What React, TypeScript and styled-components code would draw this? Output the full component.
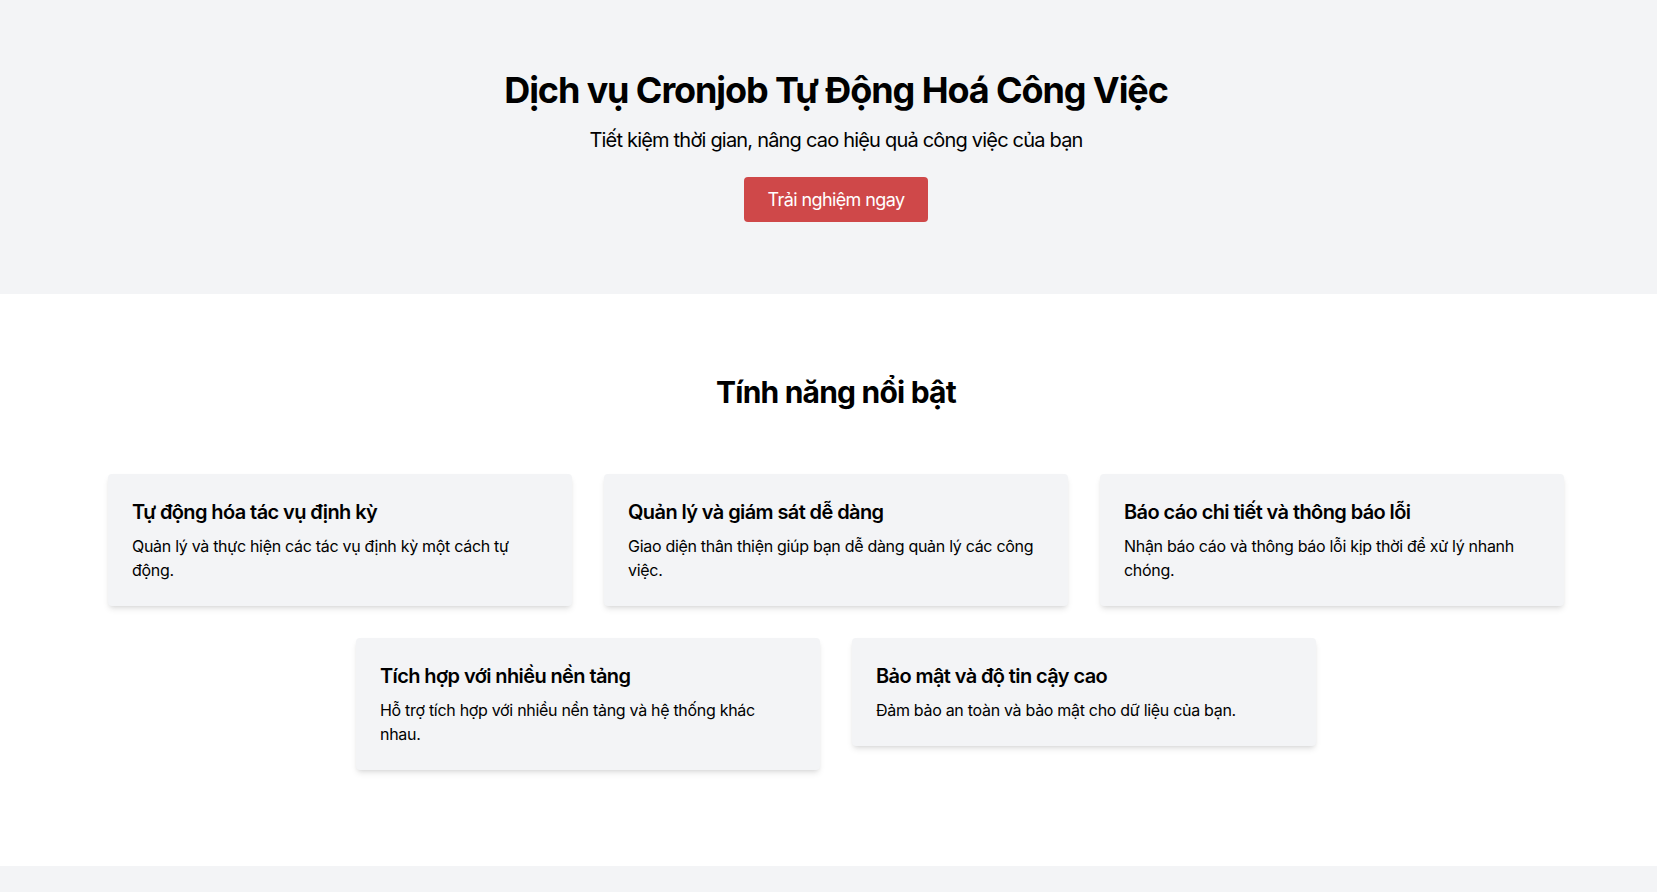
import React from "react";
import styled, { createGlobalStyle } from "styled-components";

const GlobalStyle = createGlobalStyle`
  * { box-sizing: border-box; }
  html, body { margin: 0; padding: 0; }
  body {
    font-family: Inter, "Noto Sans", "Liberation Sans", sans-serif;
    color: #000;
    background: #fff;
    -webkit-font-smoothing: antialiased;
  }
`;

const Hero = styled.header`
  background: #f3f4f6;
  padding: 70px 1px 72px 16px;
  display: flex;
  flex-direction: column;
  align-items: center;
  text-align: center;
`;

const HeroTitle = styled.h1`
  margin: 0 0 16px;
  font-size: 36px;
  line-height: 40px;
  font-weight: 700;
  letter-spacing: -1.1px;
`;

const HeroSubtitle = styled.p`
  margin: 0 0 23px;
  font-size: 20px;
  line-height: 28px;
  font-weight: 400;
  letter-spacing: -0.8px;
`;

const CtaButton = styled.button`
  font-family: inherit;
  font-size: 18px;
  line-height: 28px;
  letter-spacing: -0.6px;
  white-space: nowrap;
  color: #fff;
  background: #cf4849;
  border: none;
  border-radius: 4px;
  padding: 8.5px 24px;
  cursor: pointer;
`;

const Features = styled.section`
  padding: 80px 1px 96px 16px;
  display: flex;
  flex-direction: column;
  align-items: center;
`;

const SectionTitle = styled.h2`
  margin: 0 0 64px;
  font-size: 30px;
  line-height: 36px;
  font-weight: 700;
  letter-spacing: -0.8px;
`;

const CardGrid = styled.div`
  width: 1456px;
  display: flex;
  flex-wrap: wrap;
  justify-content: center;
  align-items: flex-start;
  gap: 32px;
`;

const Card = styled.article`
  width: 464px;
  background: #f3f4f6;
  border-radius: 4px;
  padding: 24px;
  box-shadow: 0 4px 6px -1px rgba(0, 0, 0, 0.1), 0 2px 4px -2px rgba(0, 0, 0, 0.1);
`;

const CardTitle = styled.h3`
  margin: 0 0 8px;
  font-size: 20px;
  line-height: 28px;
  font-weight: 600;
  letter-spacing: -0.6px;
`;

const CardText = styled.p`
  margin: 0;
  font-size: 16px;
  line-height: 24px;
  letter-spacing: -0.3px;
`;

const Footer = styled.footer`
  background: #f3f4f6;
  min-height: 120px;
`;

const features = [
  {
    title: "Tự động hóa tác vụ định kỳ",
    text: "Quản lý và thực hiện các tác vụ định kỳ một cách tự động.",
  },
  {
    title: "Quản lý và giám sát dễ dàng",
    text: "Giao diện thân thiện giúp bạn dễ dàng quản lý các công việc.",
  },
  {
    title: "Báo cáo chi tiết và thông báo lỗi",
    text: "Nhận báo cáo và thông báo lỗi kịp thời để xử lý nhanh chóng.",
  },
  {
    title: "Tích hợp với nhiều nền tảng",
    text: "Hỗ trợ tích hợp với nhiều nền tảng và hệ thống khác nhau.",
  },
  {
    title: "Bảo mật và độ tin cậy cao",
    text: "Đảm bảo an toàn và bảo mật cho dữ liệu của bạn.",
  },
];

export default function App() {
  return (
    <>
      <GlobalStyle />
      <Hero>
        <HeroTitle>Dịch vụ Cronjob Tự Động Hoá Công Việc</HeroTitle>
        <HeroSubtitle>Tiết kiệm thời gian, nâng cao hiệu quả công việc của bạn</HeroSubtitle>
        <CtaButton>Trải nghiệm ngay</CtaButton>
      </Hero>
      <Features>
        <SectionTitle>Tính năng nổi bật</SectionTitle>
        <CardGrid>
          {features.map((f) => (
            <Card key={f.title}>
              <CardTitle>{f.title}</CardTitle>
              <CardText>{f.text}</CardText>
            </Card>
          ))}
        </CardGrid>
      </Features>
      <Footer />
    </>
  );
}
